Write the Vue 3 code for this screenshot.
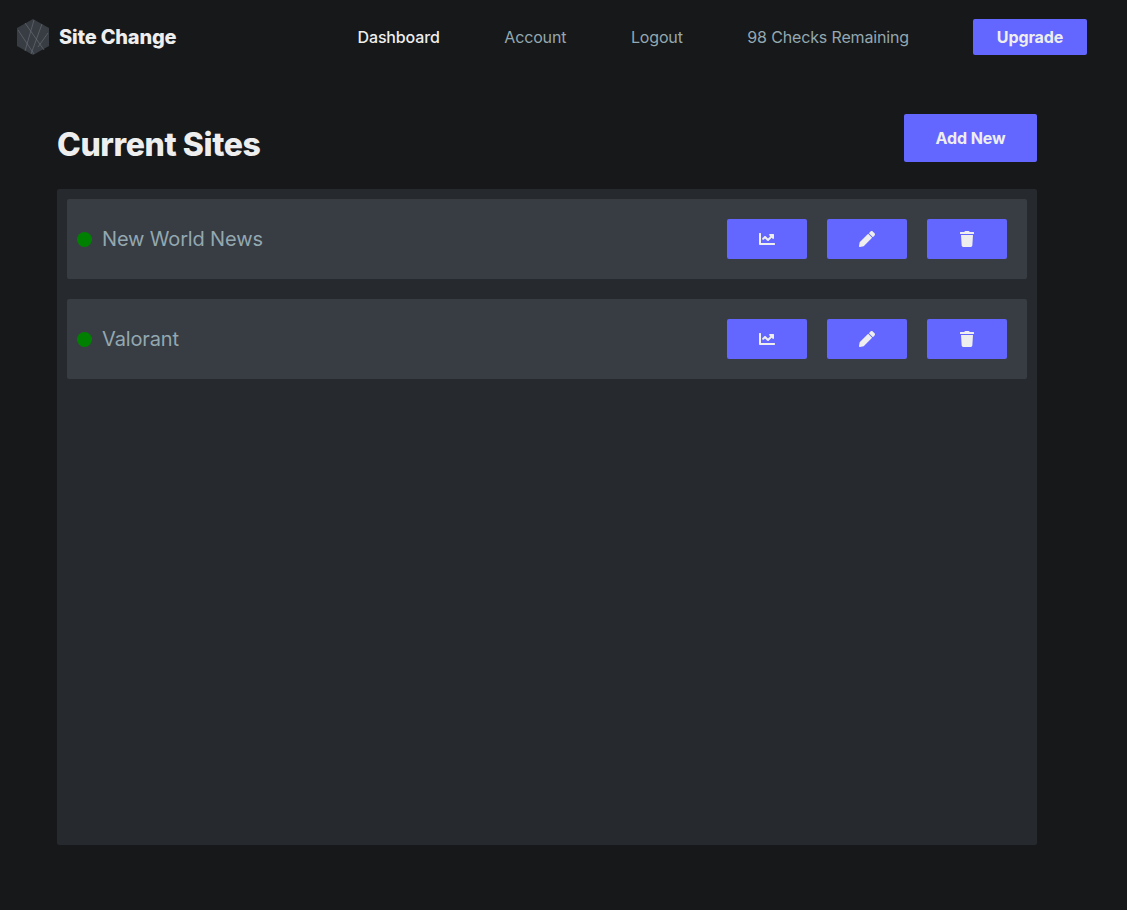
<template>
  <div class="page">
    <nav class="navbar">
      <a class="brand" href="#">
        <svg class="logo" viewBox="0 0 32 36">
          <polygon points="16,0 32,9 32,27 16,36 0,27 0,9" fill="#383c43" />
          <g stroke="#6d737c" stroke-width="0.6" fill="none">
            <path d="M1 11 L17 35" />
            <path d="M8 4 L27 31" />
            <path d="M17 1 L8 32" />
            <path d="M25 5 L14 35" />
            <path d="M31 14 L21 28" />
          </g>
        </svg>
        <span class="brand-name">Site Change</span>
      </a>
      <div class="nav-links">
        <a
          v-for="link in links"
          :key="link.label"
          href="#"
          class="nav-link"
          :class="{ active: link.active }"
        >
          {{ link.label }}
        </a>
        <span class="nav-link">{{ checksLeft }} Checks Remaining</span>
      </div>
      <button class="upgrade-btn">Upgrade</button>
    </nav>

    <main class="content">
      <div class="content-header">
        <h1 class="title">Current Sites</h1>
        <button class="add-btn">Add New</button>
      </div>

      <div class="site-list">
        <div v-for="site in sites" :key="site" class="site-row">
          <span class="status-dot"></span>
          <span class="site-name">{{ site }}</span>
          <div class="site-actions">
            <button class="icon-btn" aria-label="Stats">
              <svg viewBox="0 0 512 512" class="icon">
                <path d="M496 384H64V80c0-8.84-7.16-16-16-16H16C7.16 64 0 71.16 0 80v336c0 17.67 14.33 32 32 32h464c8.84 0 16-7.16 16-16v-32c0-8.84-7.16-16-16-16zM464 96H345.94c-21.38 0-32.09 25.85-16.97 40.97l32.4 32.4L288 242.75l-73.37-73.37c-12.5-12.5-32.76-12.5-45.25 0l-68.69 68.69c-6.25 6.25-6.25 16.38 0 22.63l22.62 22.62c6.25 6.25 16.38 6.25 22.63 0L192 237.25l73.37 73.37c12.5 12.5 32.76 12.5 45.25 0l96-96 32.4 32.4c15.12 15.12 40.97 4.41 40.97-16.97V112c.01-8.84-7.15-16-16-16z" />
              </svg>
            </button>
            <button class="icon-btn" aria-label="Edit">
              <svg viewBox="0 0 512 512" class="icon">
                <path d="M497.9 142.1l-46.1 46.1c-4.7 4.7-12.3 4.7-17 0l-111-111c-4.7-4.7-4.7-12.3 0-17l46.1-46.1c18.7-18.7 49.1-18.7 67.9 0l60.1 60.1c18.8 18.7 18.8 49.1 0 67.9zM284.2 99.8L21.6 362.4.4 483.9c-2.9 16.4 11.4 30.6 27.8 27.8l121.5-21.3 262.6-262.6c4.7-4.7 4.7-12.3 0-17l-111-111c-4.8-4.7-12.4-4.7-17.1 0z" />
              </svg>
            </button>
            <button class="icon-btn" aria-label="Delete">
              <svg viewBox="0 0 448 512" class="icon">
                <path d="M432 32H312l-9.4-18.7A24 24 0 0 0 281.1 0H166.8a23.72 23.72 0 0 0-21.4 13.3L136 32H16A16 16 0 0 0 0 48v32a16 16 0 0 0 16 16h416a16 16 0 0 0 16-16V48a16 16 0 0 0-16-16zM53.2 467a48 48 0 0 0 47.9 45h245.8a48 48 0 0 0 47.9-45L416 128H32z" />
              </svg>
            </button>
          </div>
        </div>
      </div>
    </main>
  </div>
</template>

<script setup>
const links = [
  { label: 'Dashboard', active: true },
  { label: 'Account', active: false },
  { label: 'Logout', active: false }
]
const checksLeft = 98
const sites = ['New World News', 'Valorant']
</script>

<style>
body {
  background: #17181a;
}
</style>

<style scoped>
.page {
  min-height: 910px;
  background: #17181a;
  font-family: Inter, "Liberation Sans", sans-serif;
}

.navbar {
  display: flex;
  align-items: center;
  height: 74px;
  padding: 0 40px 0 17px;
}

.brand {
  display: flex;
  align-items: center;
  gap: 10px;
  text-decoration: none;
}

.logo {
  width: 32px;
  height: 36px;
}

.brand-name {
  color: #eeeeee;
  font-size: 20px;
  font-weight: 800;
  letter-spacing: -0.2px;
}

.nav-links {
  display: flex;
  align-items: center;
  gap: 64.6px;
  margin-left: auto;
  margin-right: 64px;
}

.nav-link {
  color: #93a8b0;
  font-size: 16px;
  letter-spacing: -0.15px;
  text-decoration: none;
}

.nav-link.active {
  color: #eeeeee;
  font-weight: 500;
}

.upgrade-btn {
  width: 114px;
  height: 36px;
  border: none;
  border-radius: 2px;
  background: #6366ff;
  color: #eeeeee;
  font-family: inherit;
  font-size: 16px;
  font-weight: 700;
  letter-spacing: -0.1px;
}

.content {
  width: 980px;
  margin-left: 57px;
  padding-top: 40px;
}

.content-header {
  display: flex;
  align-items: center;
  justify-content: space-between;
  height: 48px;
  margin-bottom: 27px;
}

.title {
  margin: 0;
  color: #eeeeee;
  font-size: 32px;
  font-weight: 800;
  letter-spacing: -0.4px;
  padding-top: 12px;
}

.add-btn {
  width: 133px;
  height: 48px;
  border: none;
  border-radius: 2px;
  background: #6366ff;
  color: #eeeeee;
  font-family: inherit;
  font-size: 16px;
  font-weight: 700;
  letter-spacing: -0.1px;
}

.site-list {
  display: flex;
  flex-direction: column;
  gap: 20px;
  height: 656px;
  box-sizing: border-box;
  padding: 10px;
  border-radius: 2px;
  background: #26292d;
}

.site-row {
  display: flex;
  align-items: center;
  height: 80px;
  padding: 0 20px 0 10px;
  border-radius: 2px;
  background: #383c43;
}

.status-dot {
  width: 15px;
  height: 15px;
  border-radius: 50%;
  background: #008000;
}

.site-name {
  margin-left: 10px;
  color: #93a8b0;
  font-size: 20px;
  letter-spacing: -0.15px;
}

.site-actions {
  display: flex;
  gap: 20px;
  margin-left: auto;
}

.icon-btn {
  display: flex;
  align-items: center;
  justify-content: center;
  width: 80px;
  height: 40px;
  border: none;
  border-radius: 2px;
  background: #6366ff;
}

.icon {
  width: 16px;
  height: 16px;
  fill: #eeeeee;
}
</style>
